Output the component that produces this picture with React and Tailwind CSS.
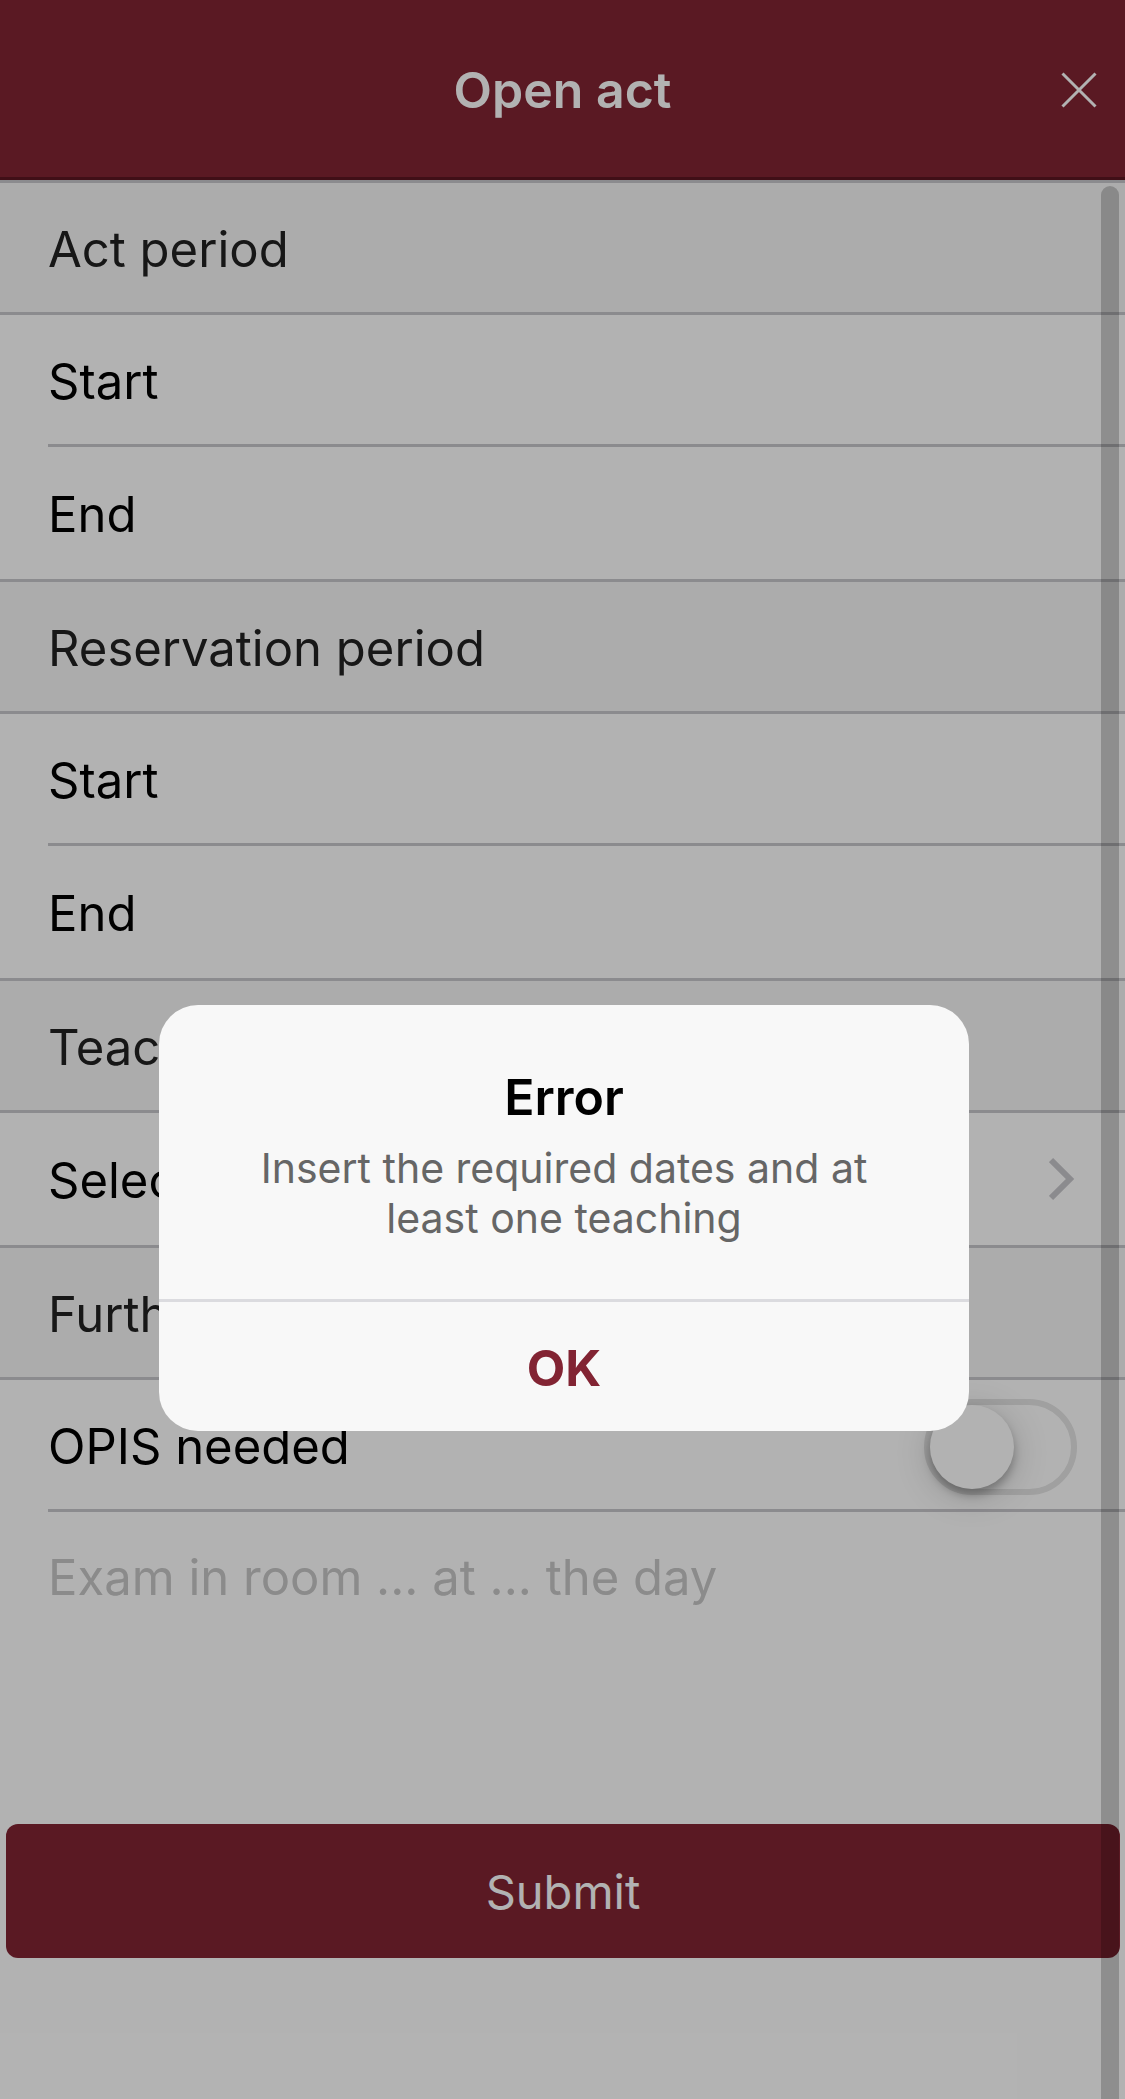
import React from "react";

function SectionTitle({ children }) {
  return (
    <h2 className="flex h-[132px] items-center border-b-[3px] border-[#c8c7cc] bg-[#f7f7f7] px-12 pt-1 font-normal text-[#222222]">
      {children}
    </h2>
  );
}

function Row({ children, last }) {
  return (
    <div className={last ? "border-b-[3px] border-[#c8c7cc] pt-1" : "ml-12 border-b-[3px] border-[#c8c7cc] pt-1"}>
      <div className={`flex items-center justify-between pr-12 ${last ? "h-[128px] pl-12" : "h-[125px]"}`}>
        {children}
      </div>
    </div>
  );
}

function DateField({ id, label, last }) {
  return (
    <Row last={last}>
      <label htmlFor={id}>{label}</label>
      <input id={id} type="text" readOnly className="h-full min-w-0 flex-1 bg-transparent outline-none" />
    </Row>
  );
}

export default function App() {
  return (
    <div className="relative min-h-screen overflow-hidden bg-white font-['Inter',sans-serif] text-[49px] leading-[60px] text-black">
      <header className="grid h-[180px] grid-cols-[1fr_auto_1fr] items-center border-b-[3px] border-[#5c1622] bg-[#822433] pt-[3px] text-white">
        <h1 className="col-start-2 text-[50px] font-semibold">Open act</h1>
        <button type="button" aria-label="Close" className="mr-7 justify-self-end">
          <svg width="36" height="36" viewBox="0 0 36 36" fill="none" stroke="currentColor" strokeWidth="3">
            <path d="M1.5 1.5l33 33M34.5 1.5l-33 33" />
          </svg>
        </button>
      </header>

      <form className="relative" onSubmit={(e) => e.preventDefault()}>
        <div className="border-t-[3px] border-[#c8c7cc]">
          <SectionTitle>Act period</SectionTitle>
          <DateField id="act-start" label="Start" />
          <DateField id="act-end" label="End" last />
          <SectionTitle>Reservation period</SectionTitle>
          <DateField id="res-start" label="Start" />
          <DateField id="res-end" label="End" last />
          <SectionTitle>Teachings</SectionTitle>
          <Row last>
            <button type="button" className="flex flex-1 items-center justify-between">
              Select
              <svg className="mr-[2px]" width="26" height="48" viewBox="0 0 26 48" fill="none" stroke="#c8c7cc" strokeWidth="6">
                <path d="M2 3l19 19L2 41" />
              </svg>
            </button>
          </Row>
          <SectionTitle>Further information</SectionTitle>
          <Row>
            <label htmlFor="opis">OPIS needed</label>
            <span className="relative h-24 w-[153px]">
              <input
                id="opis"
                type="checkbox"
                className="block h-24 w-[153px] appearance-none rounded-full border-[6px] border-[#e5e5e5] bg-white"
              />
              <span className="pointer-events-none absolute top-[6px] left-[6px] size-[84px] rounded-full bg-white shadow-[0_6px_9px_rgba(0,0,0,0.25),0_6px_36px_rgba(0,0,0,0.2)]" />
            </span>
          </Row>
          <textarea
            aria-label="Notes"
            placeholder="Exam in room ... at ... the day"
            className="block h-[294px] w-full resize-none bg-transparent px-12 pt-9 outline-none placeholder:text-[#c7c7c7]"
          />
        </div>
        <button type="submit" className="mx-[6px] mt-[18px] flex h-[134px] w-[calc(100%-11px)] items-center justify-center rounded-xl bg-[#822433] pt-[2px] text-[47px] text-white">
          Submit
        </button>
      </form>

      <div className="absolute top-[186px] right-[6px] bottom-0 w-[18px] rounded-t-full bg-black/20" />

      <div className="absolute inset-0 flex items-start justify-center bg-black/30 pt-[1005px]">
        <div role="alertdialog" aria-labelledby="dialog-title" aria-describedby="dialog-text" className="ml-[3px] w-[72%] overflow-hidden rounded-[39px] bg-[#f8f8f8] text-center">
          <div className="border-b-[3px] border-[#dbdbdf] px-12 pt-[62px] pb-[56px]">
            <h2 id="dialog-title" className="text-[50px] font-semibold">Error</h2>
            <p id="dialog-text" className="mt-4 px-12 text-[41px] leading-[50px] text-[#666666]">
              Insert the required dates and at least one teaching
            </p>
          </div>
          <button type="button" className="flex h-[129px] w-full items-center justify-center pt-[3px] text-[50px] font-bold text-[#822433]">
            OK
          </button>
        </div>
      </div>
    </div>
  );
}
